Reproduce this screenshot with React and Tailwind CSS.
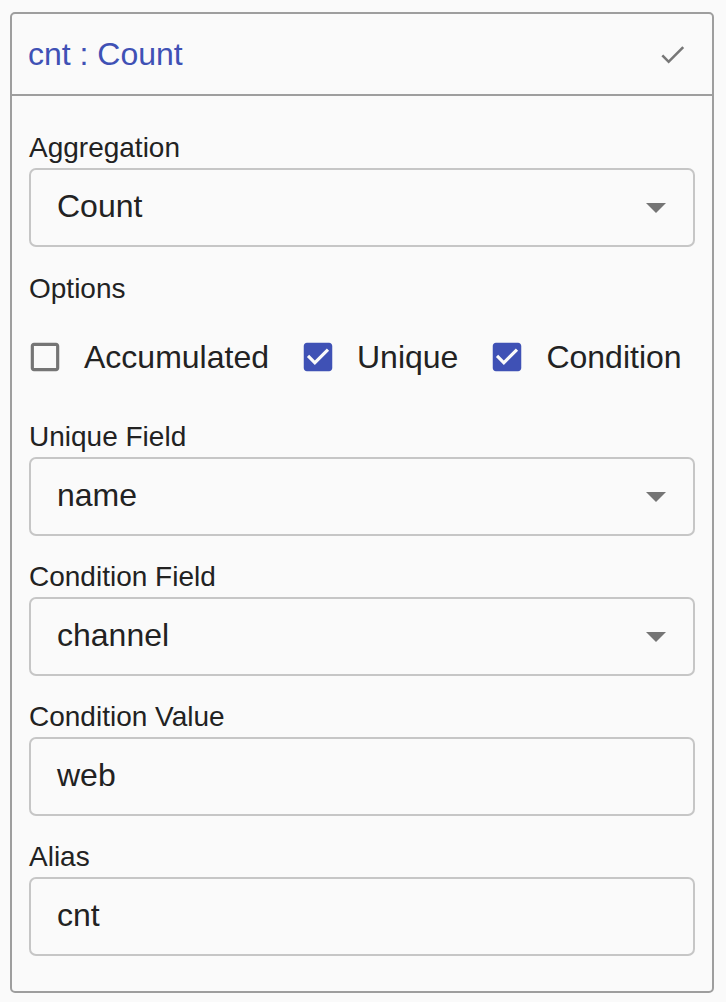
import React from 'react';

const FONT = { fontFamily: '"Liberation Sans", Arial, sans-serif' };

const ArrowDown = () => (
  <svg width="20" height="10" viewBox="7 10 10 5" className="absolute right-[27px] top-1/2 -translate-y-1/2">
    <path d="M7 10l5 5 5-5z" fill="#757575" />
  </svg>
);

const Field = ({ label, value, select, className = '' }) => (
  <div className={className}>
    <div className="h-[32px] leading-[32px] text-[28px] text-[#222]">{label}</div>
    <div className="relative mt-[4px] h-[79px] rounded-[7px] border-2 border-[#c6c6c6] flex items-center pl-[26px] pb-[3px] text-[32px] text-[#222]">
      {value}
      {select && <ArrowDown />}
    </div>
  </div>
);

const Box = ({ checked }) =>
  checked ? (
    <svg width="38" height="38" viewBox="0 0 24 24" className="shrink-0 -mx-[4px]">
      <path
        fill="#3f51b5"
        d="M19 3H5c-1.11 0-2 .9-2 2v14c0 1.1.89 2 2 2h14c1.11 0 2-.9 2-2V5c0-1.1-.89-2-2-2zm-9 14l-5-5 1.41-1.41L10 14.17l7.59-7.59L19 8l-9 9z"
      />
    </svg>
  ) : (
    <svg width="38" height="38" viewBox="0 0 24 24" className="shrink-0 -mx-[4px]">
      <path
        fill="#757575"
        d="M19 5v14H5V5h14m0-2H5c-1.1 0-2 .9-2 2v14c0 1.1.9 2 2 2h14c1.1 0 2-.89 2-2V5c0-1.1-.9-2-2-2z"
      />
    </svg>
  );

const Check = ({ label, checked }) => (
  <div className="flex items-center">
    <Box checked={checked} />
    <span className="ml-[24px] text-[32px] text-[#222]">{label}</span>
  </div>
);

export default function App() {
  return (
    <div className="min-h-[1002px] bg-[#fafafa] pt-[12px] pl-[10px]" style={FONT}>
      <div className="w-[704px] rounded-[5px] border-2 border-[#9e9e9e]">
        {/* header */}
        <div className="h-[82px] flex items-center justify-between pl-[16px] pr-[24px] border-b-2 border-[#9e9e9e]">
          <span className="text-[32px] text-[#3f51b5]">cnt : Count</span>
          <svg width="31" height="31" viewBox="0 0 24 24">
            <path fill="#777" d="M9 16.17L4.83 12l-1.42 1.41L9 19 21 7l-1.41-1.41z" />
          </svg>
        </div>

        {/* body */}
        <div className="px-[17px] pt-[36px] pb-[35px]">
          <Field label="Aggregation" value="Count" select />

          <div className="mt-[26px] h-[32px] leading-[32px] text-[28px] text-[#222]">Options</div>
          <div className="mt-[20px] h-[64px] flex items-center gap-[34px] pl-[1px]">
            <Check label="Accumulated" />
            <Check label="Unique" checked />
            <Check label="Condition" checked />
          </div>

          <Field className="mt-[32px]" label="Unique Field" value="name" select />
          <Field className="mt-[25px]" label="Condition Field" value="channel" select />
          <Field className="mt-[25px]" label="Condition Value" value="web" />
          <Field className="mt-[25px]" label="Alias" value="cnt" />
        </div>
      </div>
    </div>
  );
}
